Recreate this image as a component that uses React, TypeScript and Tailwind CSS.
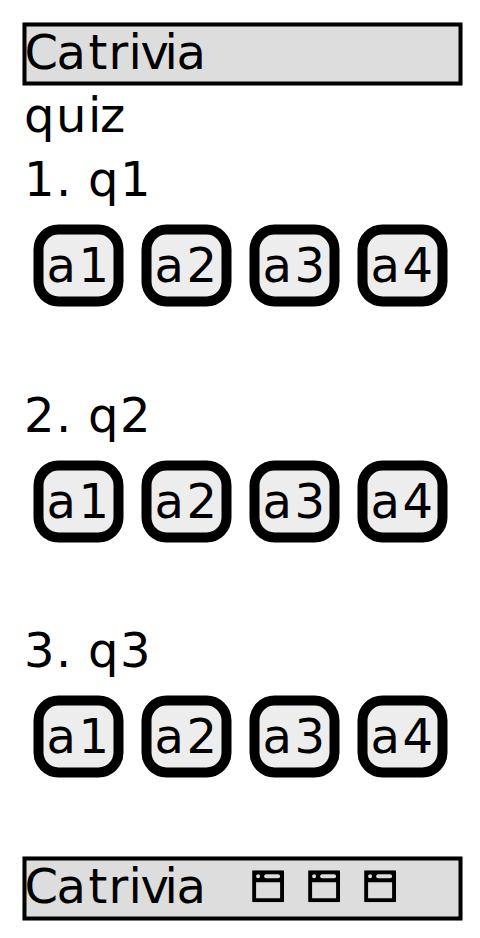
const tracking: Record<string, string> = {
  C: "tracking-[-1.52px]",
  a: "tracking-[2.59px]",
  t: "tracking-[1.18px]",
  r: "tracking-[0.27px]",
  i: "tracking-[-1.34px]",
  v: "tracking-[-4.41px]",
  q: "tracking-[1.53px]",
  u: "tracking-[1.58px]",
  z: "tracking-[2.8px]",
  ".": "tracking-[0.74px]",
  " ": "tracking-[0.74px]",
};

function Label({ text }: { text: string }) {
  return (
    <>
      {text.split("").map((c, i) => (
        <span key={i} className={tracking[c] ?? "tracking-[1.46px]"}>{c}</span>
      ))}
    </>
  );
}

function WindowIcon() {
  return (
    <svg viewBox="0 0 32 32" className="block h-8 w-8 translate-x-[-0.4px] translate-y-[-0.3px]">
      <path
        fillRule="evenodd"
        d="M1 0H31Q32 0 32 1V31Q32 32 31 32H1Q0 32 0 31V1Q0 0 1 0ZM4 12V28H28V12ZM6 4A2 2 0 0 0 6 8A2 2 0 0 0 6 4ZM14 4A2 2 0 0 0 14 8H26A2 2 0 0 0 26 4Z"
      />
    </svg>
  );
}

function Question({ n }: { n: number }) {
  return (
    <section className="h-[235.5px]">
      <h2 className="h-16 pl-6 leading-[64px] whitespace-pre">
        <div className="translate-y-[1px]"><Label text={`${n}. q${n}`} /></div>
      </h2>
      <div className="flex gap-[18px] pl-[33px] pt-[14px]">
        {[1, 2, 3, 4].map((a) => (
          <button key={a} className="h-[82px] w-[90px] translate-x-[0.5px] translate-y-[0.5px] rounded-[25px] border-[10px] border-black bg-[#ededed] pb-[2px] pl-[3px] text-left leading-[60px] whitespace-nowrap">
            <Label text={`a${a}`} />
          </button>
        ))}
      </div>
    </section>
  );
}

export default function App() {
  return (
    <div className="h-[938px] w-[480px] overflow-hidden bg-white pt-[22px] text-[48px] text-black [font-family:'DejaVu_Sans',sans-serif] [font-kerning:none]">
      <header className="ml-[22px] h-[63px] w-[440px] translate-x-[0.5px] translate-y-[0.5px] border-4 border-black bg-[#ddd] leading-[56px]">
        <div className="-mt-[3px] -ml-[2px]"><Label text="Catrivia" /></div>
      </header>
      <main className="h-[771px]">
        <h1 className="h-[61px] pl-6 leading-[61px]"><Label text="quiz" /></h1>
        {[1, 2, 3].map((n) => <Question key={n} n={n} />)}
      </main>
      <footer className="ml-[22px] flex h-16 w-[440px] translate-x-[0.5px] translate-y-[0.5px] border-4 border-black bg-[#ddd] leading-[56px]">
        <div className="-mt-[3px] -ml-[2px] w-[228px]"><Label text="Catrivia" /></div>
        <div className="flex gap-6 pt-[10px]">
          <WindowIcon />
          <WindowIcon />
          <WindowIcon />
        </div>
      </footer>
    </div>
  );
}
